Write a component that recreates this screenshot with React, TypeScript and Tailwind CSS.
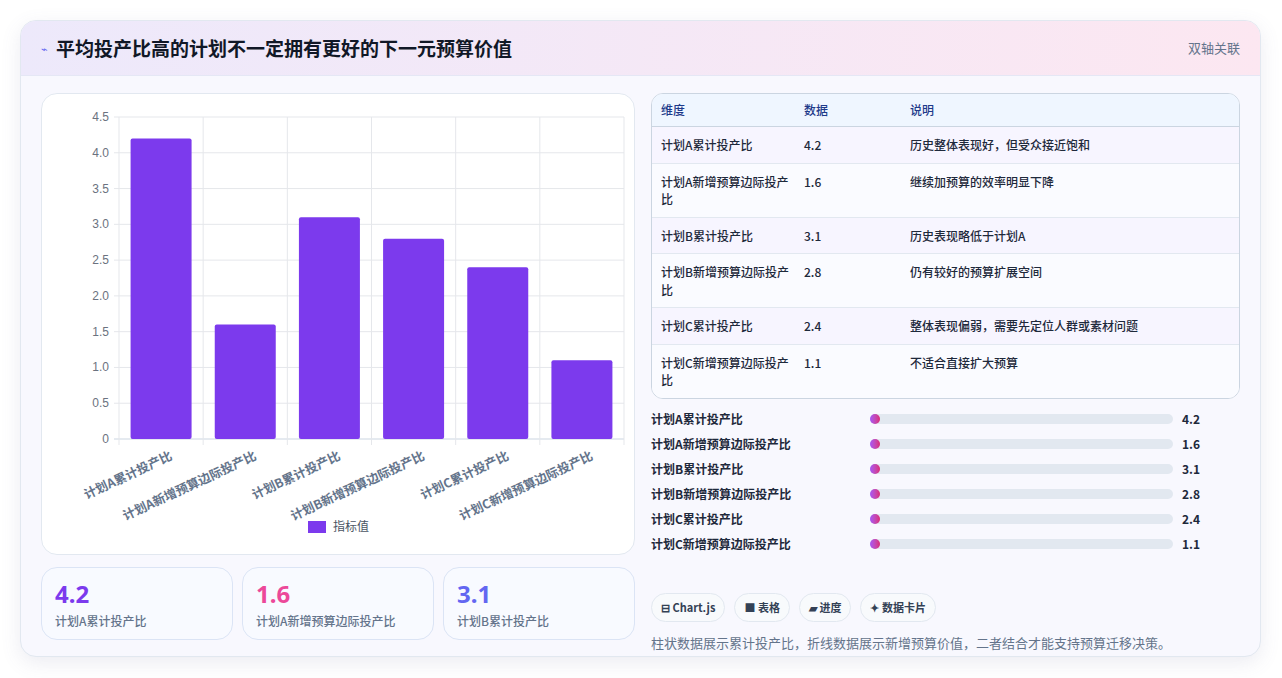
import React from "react";

const data = [
  { k: "计划A累计投产比", v: 4.2, d: "历史整体表现好，但受众接近饱和" },
  { k: "计划A新增预算边际投产比", v: 1.6, d: "继续加预算的效率明显下降" },
  { k: "计划B累计投产比", v: 3.1, d: "历史表现略低于计划A" },
  { k: "计划B新增预算边际投产比", v: 2.8, d: "仍有较好的预算扩展空间" },
  { k: "计划C累计投产比", v: 2.4, d: "整体表现偏弱，需要先定位人群或素材问题" },
  { k: "计划C新增预算边际投产比", v: 1.1, d: "不适合直接扩大预算" },
];

function Chart() {
  // svg coords relative to chart card (card at x40,y92)
  const x0 = 77, x1 = 582, yTop = 23, yBot = 345;
  const cw = (x1 - x0) / 6;
  const ticks = [0, 0.5, 1, 1.5, 2, 2.5, 3, 3.5, 4, 4.5];
  const y = (v: number) => yBot - (v / 4.5) * (yBot - yTop);
  return (
    <svg width="593" height="460" className="block" style={{ fontFamily: "'Liberation Sans','Noto Sans CJK SC',sans-serif" }}>
      {ticks.map((t) => (
        <g key={t}>
          <line x1={x0 - 5} x2={x1} y1={y(t)} y2={y(t)} stroke={t === 0 ? "#cbd5e1" : "#e5e7eb"} />
          <text x={x0 - 10} y={y(t) + 4} textAnchor="end" fontSize="12" fill="#6b7280">{t === 0 ? "0" : t.toFixed(1)}</text>
        </g>
      ))}
      {Array.from({ length: 7 }).map((_, i) => (
        <line key={i} x1={x0 + i * cw} x2={x0 + i * cw} y1={yTop} y2={yBot + 6} stroke="#e5e7eb" />
      ))}
      {data.map((d, i) => {
        const cx = x0 + i * cw + cw / 2;
        return (
          <g key={d.k}>
            <rect x={cx - 30.5} y={y(d.v)} width="61" height={yBot - y(d.v)} rx="2" fill="#7c3aed" />
            <text
              transform={`translate(${cx + 12},${yBot + 20}) rotate(-25)`}
              textAnchor="end"
              fontSize="12.5"
              fill="#64748b"
              fontWeight="600"
              style={{ fontFamily: "'Noto Sans CJK SC',sans-serif" }}
            >
              {d.k}
            </text>
          </g>
        );
      })}
      <rect x="266" y="427" width="18" height="12" fill="#7c3aed" />
      <text x="291" y="437" fontSize="12" fill="#4b5563" style={{ fontFamily: "'Noto Sans CJK SC',sans-serif" }}>指标值</text>
    </svg>
  );
}

export default function App() {
  return (
    <div className="w-[1282px] h-[678px] bg-white p-5 pb-0" style={{ fontFamily: "'Noto Sans CJK SC','Noto Sans',sans-serif" }}>
      <div className="w-[1241px] h-[637px] rounded-2xl border border-[#e2e8f0] bg-[#f8f8fe] shadow-[0_6px_20px_rgba(100,100,150,0.12)] overflow-hidden">
        <div className="h-[55px] flex items-center justify-between px-5 bg-gradient-to-r from-[#ede9fb] to-[#fce7f1] border-b border-[#e5e7f5]">
          <div className="flex items-center gap-2">
            <span className="text-[#6366f1] text-[11px]">⌁</span>
            <span className="text-[19px] font-bold text-[#111827]">平均投产比高的计划不一定拥有更好的下一元预算价值</span>
          </div>
          <span className="text-[13px] text-[#64748b]">双轴关联</span>
        </div>
        <div className="flex gap-4 px-5 pt-[17px]">
          <div className="w-[594px] flex flex-col gap-3">
            <div className="h-[462px] rounded-2xl border border-[#e2e8f0] bg-white overflow-hidden">
              <Chart />
            </div>
            <div className="grid grid-cols-3 gap-[9px]">
              {[
                ["4.2", "计划A累计投产比", "text-[#7c3aed]"],
                ["1.6", "计划A新增预算边际投产比", "text-[#ec4899]"],
                ["3.1", "计划B累计投产比", "text-[#6366f1]"],
              ].map(([v, l, c]) => (
                <div key={l} className="h-[73px] rounded-2xl border border-[#dbe4f5] bg-[#f8faff] px-[13px] pt-[9px]">
                  <div className={`text-[24px] font-bold leading-[34px] ${c}`} style={{ fontFamily: "'Noto Sans',sans-serif" }}>{v}</div>
                  <div className="text-[12px] text-[#64748b] font-medium mt-[1px]">{l}</div>
                </div>
              ))}
            </div>
          </div>
          <div className="w-[594px] flex flex-col">
            <div className="rounded-xl border border-[#cbd5e1] bg-white overflow-hidden text-[12px] text-[#1e293b] font-medium">
              <div className="flex h-[33px] items-center bg-[#eff6ff] border-b border-[#cbd5e1] text-[#1e3a8a]">
                <div className="w-[152px] pl-[9px]">维度</div>
                <div className="w-[106px]">数据</div>
                <div>说明</div>
              </div>
              {data.map((d, i) => (
                <div key={d.k} className={`flex py-[9px] leading-[17.5px] ${i < 5 ? "border-b border-[#e2e8f0]" : ""} ${i % 2 ? "bg-[#fafbff]" : "bg-[#f7f5ff]"}`}>
                  <div className="w-[152px] pl-[9px] pr-2">{d.k}</div>
                  <div className="w-[106px]">{d.v}</div>
                  <div>{d.d}</div>
                </div>
              ))}
            </div>
            <div className="flex flex-col gap-[7px] mt-[11px] text-[12px] font-bold text-[#1e293b]">
              {data.map((d) => (
                <div key={d.k} className="flex items-center h-[18px]">
                  <div className="w-[219px]">{d.k}</div>
                  <div className="w-[303px] h-[10px] rounded-full bg-[#e2e8f0] relative">
                    <div className="absolute left-0 top-0 h-[10px] w-[10px] rounded-full bg-gradient-to-r from-[#a855f7] to-[#db2777]" />
                  </div>
                  <div className="ml-[9px]">{d.v}</div>
                </div>
              ))}
            </div>
            <div className="flex gap-[9px] mt-[40px]">
              {["⊟ Chart.js", "■ 表格", "▰ 进度", "✦ 数据卡片"].map((c) => (
                <div key={c} className="h-[29px] px-[9px] flex items-center rounded-full border border-[#e2e8f0] bg-[#f8fafc] text-[11px] font-bold text-[#334155]">{c}</div>
              ))}
            </div>
            <div className="mt-[11px] text-[13px] text-[#64748b]">柱状数据展示累计投产比，折线数据展示新增预算价值，二者结合才能支持预算迁移决策。</div>
          </div>
        </div>
      </div>
    </div>
  );
}
